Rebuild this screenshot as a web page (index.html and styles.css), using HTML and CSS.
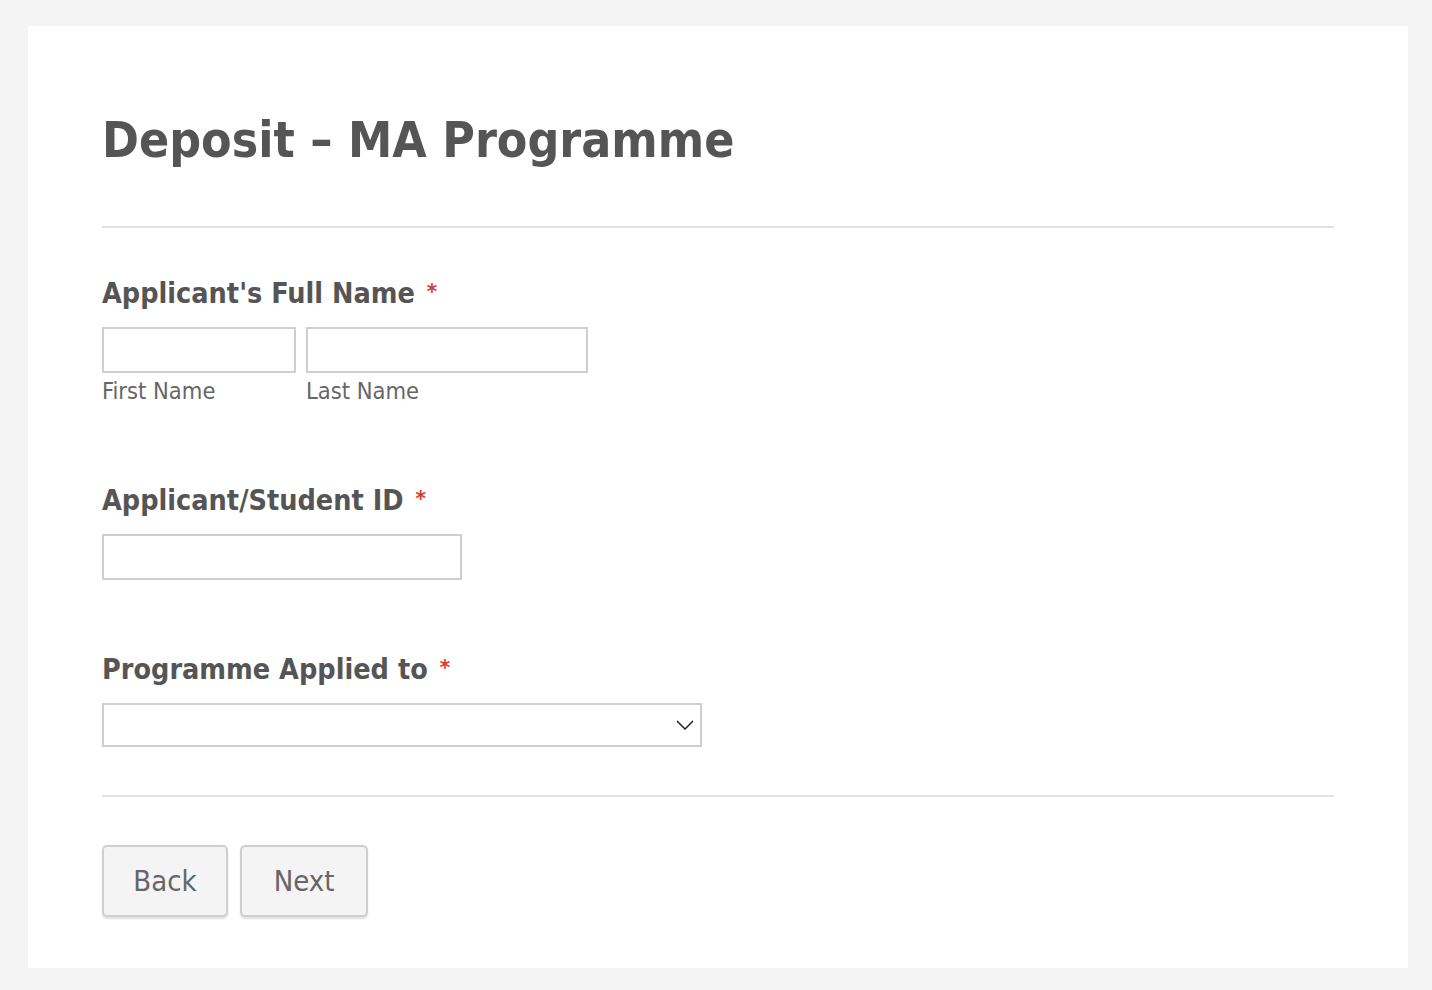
FILE: index.html
```html
<!DOCTYPE html>
<html>
<head>
<meta charset="utf-8">
<link rel="stylesheet" href="styles.css">
</head>
<body>
<div class="card">
  <h1 class="title">Deposit – MA Programme</h1>
  <hr class="rule rule-top">
  <div class="field field-name">
    <label class="label">Applicant's Full Name <span class="req">*</span></label>
    <div class="name-row">
      <div class="name-col">
        <input class="input input-first" type="text">
        <span class="sub">First Name</span>
      </div>
      <div class="name-col">
        <input class="input input-last" type="text">
        <span class="sub">Last Name</span>
      </div>
    </div>
  </div>
  <div class="field field-id">
    <label class="label">Applicant/Student ID <span class="req">*</span></label>
    <input class="input input-id" type="text">
  </div>
  <div class="field field-prog">
    <label class="label">Programme Applied to <span class="req">*</span></label>
    <div class="select">
      <svg class="chev" width="18" height="10" viewBox="0 0 18 10"><path d="M1 1 L9 9 L17 1" fill="none" stroke="#222" stroke-width="1.5"/></svg>
    </div>
  </div>
  <hr class="rule rule-bottom">
  <div class="buttons">
    <button class="btn btn-back">Back</button>
    <button class="btn btn-next">Next</button>
  </div>
</div>
</body>
</html>
```
FILE: styles.css
```css
html, body {
  margin: 0;
  padding: 0;
  background: #f4f4f4;
}
body {
  padding: 26px 24px 22px 28px;
  font-family: "DejaVu Sans Condensed", "DejaVu Sans", Verdana, sans-serif;
  color: #555;
}
.card {
  background: #fff;
  width: 1380px;
  height: 942px;
  box-sizing: border-box;
  padding: 0 74px 0 74px;
  display: flex;
  flex-direction: column;
}
.title {
  margin: 0;
  padding-top: 84px;
  font-size: 49.5px;
  line-height: 60px;
  font-weight: bold;
  color: #555;
}
.rule {
  border: 0;
  border-top: 2px solid #e2e2e2;
  margin: 0;
  width: 100%;
}
.rule-top { margin-top: 56px; }
.field { display: flex; flex-direction: column; }
.label {
  font-size: 28.5px;
  font-weight: bold;
  line-height: 34px;
  color: #555;
}
.req { color: #e03a2a; font-size: 22px; vertical-align: 4px; margin-left: 3px; }
.field-name { margin-top: 47px; }
.name-row { display: flex; gap: 10px; margin-top: 16px; }
.name-col { display: flex; flex-direction: column; }
.input {
  box-sizing: border-box;
  height: 46px;
  border: 2px solid #cfcfcf;
  margin: 0;
  padding: 0;
  background: #fff;
  outline: none;
}
.input-first { width: 194px; }
.input-last { width: 282px; }
.sub {
  font-size: 23.5px;
  color: #666;
  margin-top: 5px;
  line-height: 27px;
}
.field-id { margin-top: 77px; }
.input-id { width: 360px; margin-top: 16px; }
.field-prog { margin-top: 71px; }
.select {
  box-sizing: border-box;
  width: 600px;
  height: 44px;
  border: 2px solid #cfcfcf;
  margin-top: 16px;
  display: flex;
  align-items: center;
  justify-content: flex-end;
  padding-right: 6px;
}
.rule-bottom { margin-top: 48px; }
.buttons { display: flex; gap: 12px; margin-top: 48px; }
.btn {
  font-family: inherit;
  height: 72px;
  border: 2px solid #cfcfcf;
  border-radius: 5px;
  background: #f4f4f4;
  box-shadow: 0 2px 2px rgba(0,0,0,0.12);
  font-size: 29px;
  color: #666;
  padding: 0;
}
.btn-back { width: 126px; }
.btn-next { width: 128px; }
```
